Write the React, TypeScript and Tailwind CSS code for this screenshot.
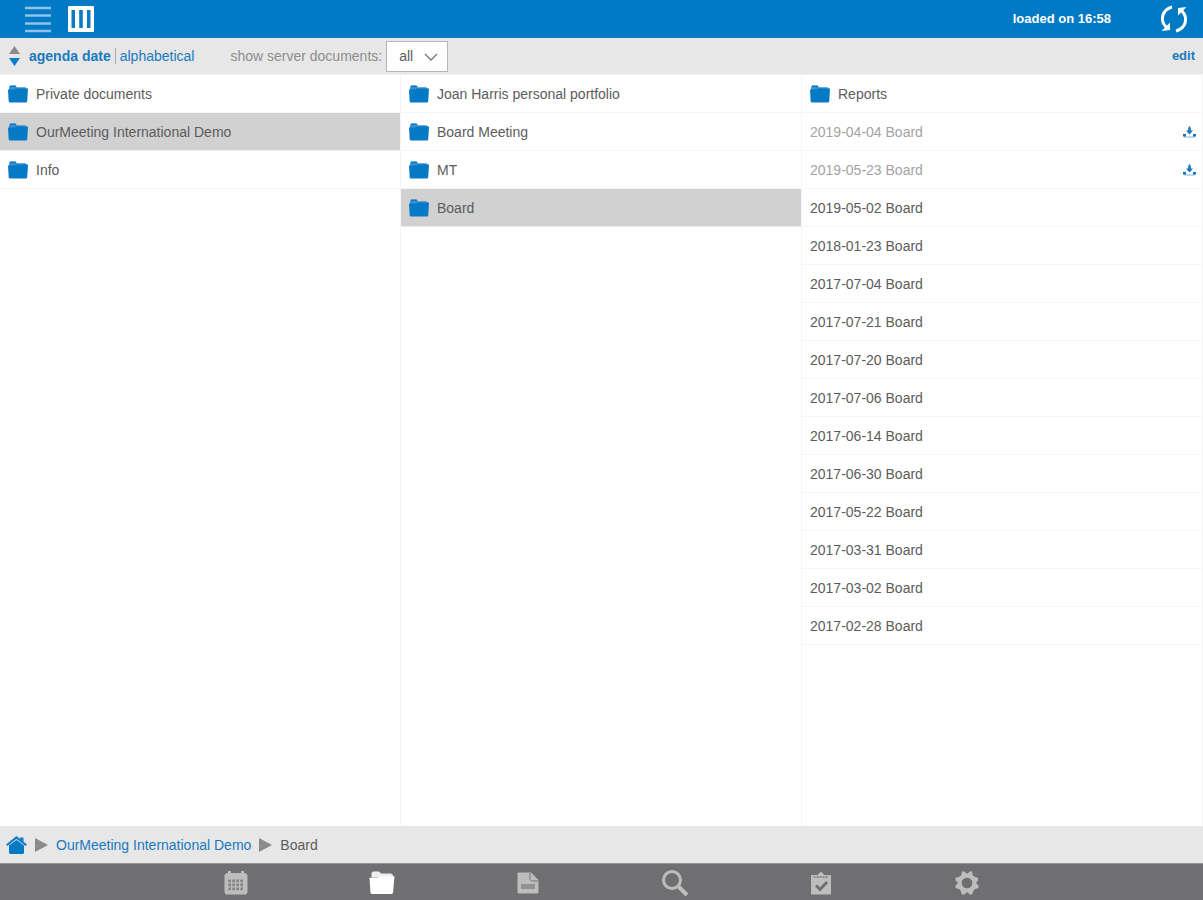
import { useState, type ReactNode } from "react";

type Item = {
  name: string;
  folder?: boolean;
  remote?: boolean;
};

const columns: Item[][] = [
  [
    { name: "Private documents", folder: true },
    { name: "OurMeeting International Demo", folder: true },
    { name: "Info", folder: true },
  ],
  [
    { name: "Joan Harris personal portfolio", folder: true },
    { name: "Board Meeting", folder: true },
    { name: "MT", folder: true },
    { name: "Board", folder: true },
  ],
  [
    { name: "Reports", folder: true },
    { name: "2019-04-04 Board", remote: true },
    { name: "2019-05-23 Board", remote: true },
    { name: "2019-05-02 Board" },
    { name: "2018-01-23 Board" },
    { name: "2017-07-04 Board" },
    { name: "2017-07-21 Board" },
    { name: "2017-07-20 Board" },
    { name: "2017-07-06 Board" },
    { name: "2017-06-14 Board" },
    { name: "2017-06-30 Board" },
    { name: "2017-05-22 Board" },
    { name: "2017-03-31 Board" },
    { name: "2017-03-02 Board" },
    { name: "2017-02-28 Board" },
  ],
];

function FolderIcon() {
  return (
    <svg width="20" height="18" viewBox="0 0 20 18" className="shrink-0">
      <path d="M1 5V2.2L2 .8h5.6l1 1.4h8.6L18.4 3v2z" fill="#3d8fd0" />
      <path d="M2 .5h5.6l1 1.6H2z" fill="#0479c5" />
      <path d="M0 4.4h6.5L8 3.4h12l-.8 13.2-.8.9H1.4l-.7-.9z" fill="#0479c5" />
    </svg>
  );
}

function DownloadIcon() {
  return (
    <svg width="13" height="12" viewBox="0 0 13 12">
      <path d="M6.500 0L7.800 2v2.500H10L6.500 8.500 3 4.500h2.200V2z" fill="#1b76bf" />
      <path d="M2.500 8L1 9.500 2 11h9l1-1.500L10.500 8" fill="none" stroke="#7db3dc" strokeWidth="1.200" />
      <path d="M0 8h3v2.500H0zM10 8h3v2.500h-3z" fill="#1b76bf" />
    </svg>
  );
}

function Row({ item, selected, onSelect }: { item: Item; selected: boolean; onSelect: () => void }) {
  return (
    <li
      className={`flex h-[38px] items-center border-b pr-1.5 ${selected ? "border-[#ececec] bg-[#d1d1d1]" : "border-[#f5f5f5]"}`}
    >
      <button
        type="button"
        onClick={onSelect}
        className={`flex h-full min-w-0 flex-1 items-center gap-2 px-2 text-left ${item.remote ? "text-[#a3a3a3]" : "text-[#5c5c5c]"}`}
      >
        {item.folder && <FolderIcon />}
        <span className="truncate">{item.name}</span>
      </button>
      {item.remote && (
        <button type="button" aria-label={`Download ${item.name}`}>
          <DownloadIcon />
        </button>
      )}
    </li>
  );
}

function Arrow() {
  return (
    <svg width="13" height="14" viewBox="0 0 13 14" fill="#8b8b8b">
      <path d="M0 0l13 7-13 7z" />
    </svg>
  );
}

const tabs: { label: string; icon: ReactNode }[] = [
  {
    label: "Calendar",
    icon: (
      <svg width="24" height="24" viewBox="0 0 24 24">
        <path d="M4 0h3v2h10V0h3v2h1.500L23.500 4v17.500L22 23.500H2L.5 21.500V4L2.500 2H4z" fill="#bdbdbe" />
        <path
          d="M8.300 8.500H11v2.700H8.300zM12.300 8.500H15v2.700h-2.700zM16.300 8.500H19v2.700h-2.700zM4.300 12.500H7v2.700H4.300zM8.300 12.500H11v2.700H8.300zM12.300 12.500H15v2.700h-2.700zM16.300 12.500H19v2.700h-2.700zM4.300 16.500H7v2.700H4.300zM8.300 16.500H11v2.700H8.300zM12.300 16.500H15v2.700h-2.700zM4.300 8.500H7v2.700H4.300zM16.300 16.500H19v2.700h-2.700z"
          fill="#838385"
        />
      </svg>
    ),
  },
  {
    label: "Documents",
    icon: (
      <svg width="26" height="24" viewBox="0 0 26 24">
        <path d="M2.500 6.500V2L4 .5h6l2 2h10L24 4v2.500z" fill="#eee" />
        <path d="M.5 6.800h8l2.500-1.500h14.500L24 22l-1 1H2.500l-1-1z" fill="#fff" />
      </svg>
    ),
  },
  {
    label: "Notes",
    icon: (
      <svg width="22" height="22" viewBox="0 0 22 22">
        <path d="M.5 1.500l1-1H14L21.500 8v12.500l-1 1h-19l-1-1z" fill="#bdbdbe" />
        <path d="M13 1v6.500l1.500 1.500h6.500" fill="none" stroke="#77777a" />
        <path d="M4 12h14v5H4z" fill="#929294" />
      </svg>
    ),
  },
  {
    label: "Search",
    icon: (
      <svg width="28" height="28" viewBox="0 0 28 28" fill="none" stroke="#bdbdbe">
        <circle cx="11" cy="11" r="8.500" strokeWidth="3" />
        <path d="M17 17l9 9" strokeWidth="4" />
      </svg>
    ),
  },
  {
    label: "Tasks",
    icon: (
      <svg width="20" height="24" viewBox="0 0 20 24">
        <path d="M0 4h6.500L10 .5 13.500 4H20v19.500H0z" fill="#bdbdbe" />
        <path d="M2.500 6h15" stroke="#77777a" strokeWidth="1.500" strokeDasharray="2 1" />
        <path d="M5 14.500l4 4 7-7.500" fill="none" stroke="#6f6f71" strokeWidth="2.800" />
      </svg>
    ),
  },
  {
    label: "Settings",
    icon: (
      <svg width="24" height="24" viewBox="0 0 24 24">
        <circle cx="12" cy="12" r="7.500" fill="none" stroke="#bdbdbe" strokeWidth="4" />
        <path
          d="M6 5L7 .5h2.500L12 3.500l2.500-3H17L18 5l5 2v2.500L20.500 12l3 2.500V17L19 18.500l-2 5h-2.500L12 20.500l-2.500 3H7l-2-5L.5 17v-2.500l3-2.500-3-2.500V7zM12 6.500a5.500 5.500 0 1 0 0 11 5.500 5.500 0 0 0 0-11z"
          fillRule="evenodd"
          fill="#bdbdbe"
        />
      </svg>
    ),
  },
];

export default function App() {
  const [selected, setSelected] = useState<number[]>([1, 3, -1]);

  const select = (column: number, row: number) => {
    setSelected(selected.map((value, i) => (i === column ? row : value)));
  };

  return (
    <div className="flex min-h-screen flex-col bg-white font-['Liberation_Sans',sans-serif] text-sm text-[#5c5c5c]">
      <header className="flex h-[38px] items-center bg-[#007ac5] pr-3.5 pl-6 text-white">
        <button type="button" aria-label="List view">
          <svg width="28" height="28" viewBox="0 0 28 28" stroke="#8fc3e8" strokeWidth="2.500">
            <path d="M1 3h26M1 10.500h26M1 18.500h26M1 26h26" />
          </svg>
        </button>
        <button type="button" aria-label="Column view" className="ml-4">
          <svg width="26" height="28" viewBox="0 0 26 28">
            <rect y="1" width="26" height="26" rx="1" fill="#fff" />
            <path d="M3.500 5H7v18H3.500zM11.200 5h3.600v18h-3.600zM19 5h3.500v18H19z" fill="#0a7cc5" />
          </svg>
        </button>
        <span className="ml-auto text-[13px] font-bold">loaded on 16:58</span>
        <button type="button" aria-label="Refresh" className="ml-12">
          <svg width="30" height="28" viewBox="0 0 30 28">
            <path d="M13 2C3 5 .500 15 7 22" fill="none" stroke="#fff" strokeWidth="3" />
            <path d="M17 26C27 23 29.500 13 23 6" fill="none" stroke="#fff" strokeWidth="3" />
            <path d="M2.500 26l8.500-1V17.500zM27.500 2l-8.500 1v7.500z" fill="#fff" />
          </svg>
        </button>
      </header>

      <div className="flex h-[37px] items-center border-b border-[#f2f2f2] bg-[#e7e7e7] pr-2 pl-2">
        <svg width="13" height="20" viewBox="0 0 13 20">
          <path d="M6.500 0L12 8H1z" fill="#8b8b8b" />
          <path d="M6.500 20L12 12H1z" fill="#0c7cc6" />
        </svg>
        <button type="button" className="ml-2 font-bold text-[#1a79c0]">
          agenda date
        </button>
        <span className="mx-1 h-4 w-px bg-[#a8a8a8]" />
        <button type="button" className="text-[#1a79c0]">
          alphabetical
        </button>
        <label htmlFor="server-documents" className="ml-9 text-[#8d8d8d]">
          show server documents:
        </label>
        <div className="relative ml-1">
          <select
            id="server-documents"
            defaultValue="all"
            className="block h-[31px] w-[62px] appearance-none border border-[#b5b5b5] bg-white pl-3 text-[#5c5c5c]"
          >
            <option value="all">all</option>
            <option value="none">none</option>
          </select>
          <svg
            width="14"
            height="8"
            viewBox="0 0 14 8"
            fill="none"
            stroke="#777"
            className="pointer-events-none absolute top-3 right-2.5"
          >
            <path d="M1 1l6 6 6-6" strokeWidth="1.300" />
          </svg>
        </div>
        <button type="button" className="ml-auto text-[13px] font-bold text-[#1a79c0]">
          edit
        </button>
      </div>

      <main className="grid flex-1 grid-cols-3">
        {columns.map((items, column) => (
          <ul key={column} className="border-r border-[#f5f5f5]">
            {items.map((item, row) => (
              <Row
                key={item.name}
                item={item}
                selected={selected[column] === row}
                onSelect={() => select(column, row)}
              />
            ))}
          </ul>
        ))}
      </main>

      <nav className="flex h-[37px] items-center gap-2 bg-[#e7e7e7] px-1.5">
        <a href="#home" aria-label="Home">
          <svg width="21" height="18" viewBox="0 0 21 18">
            <path d="M3 9.500l7.500-5.500L18 9.500V17l-1 1H4l-1-1z" fill="#0479c5" />
            <path d="M0 8.500L10.500 0l3.500 2.800V1.500h3.500v4L21 8.500 19.500 10 10.500 3 1.500 10z" fill="#1c7dc6" />
          </svg>
        </a>
        <Arrow />
        <a href="#demo" className="text-[#1a79c0]">
          OurMeeting International Demo
        </a>
        <Arrow />
        <span>Board</span>
      </nav>

      <footer className="flex h-[37px] items-center justify-center border-t border-[#939393] bg-[#6f6f71] pt-0.5">
        <div className="grid w-[73%] grid-cols-6">
          {tabs.map((tab) => (
            <button key={tab.label} type="button" aria-label={tab.label} className="flex h-8 items-center justify-center">
              {tab.icon}
            </button>
          ))}
        </div>
      </footer>
    </div>
  );
}
